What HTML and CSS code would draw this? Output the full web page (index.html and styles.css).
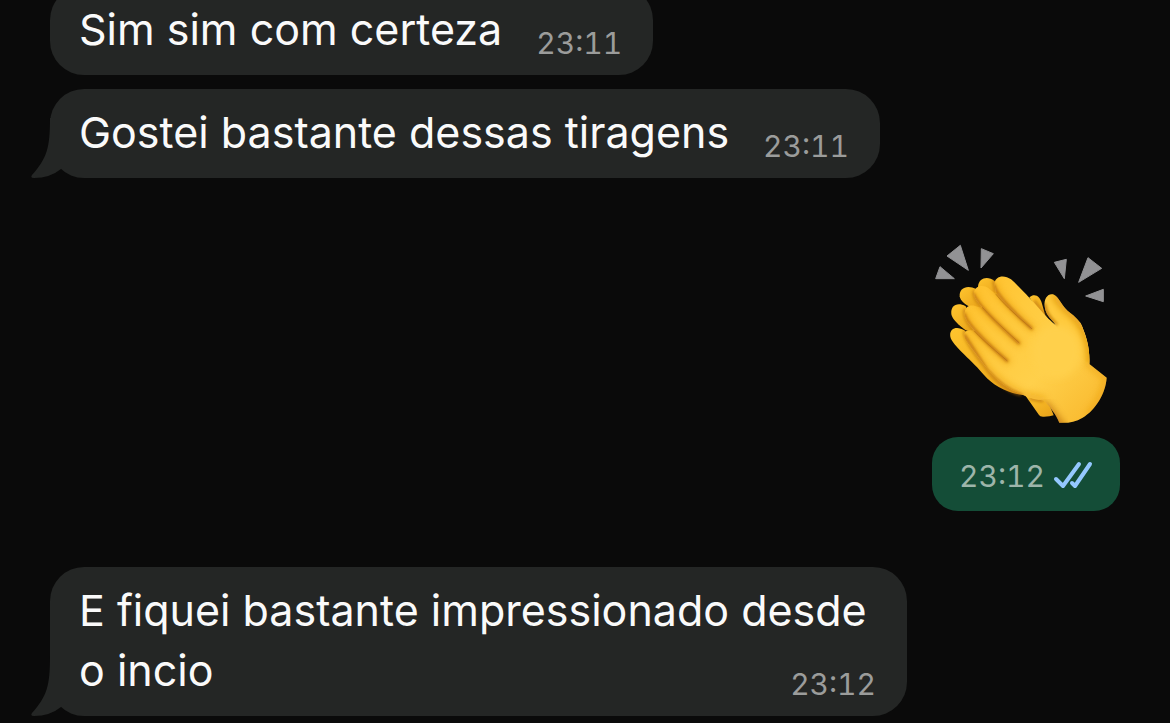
FILE: index.html
```html
<!DOCTYPE html>
<html lang="pt-BR">
<head>
    <meta charset="UTF-8">
    <meta name="viewport" content="width=device-width, initial-scale=1.0">
    <title>Conversa</title>
    <link rel="stylesheet" href="styles.css">
</head>
<body>
    <main class="chat">
        <div class="bubble">Sim sim com certeza<time class="time">23:11</time></div>

        <div class="bubble">
            <svg class="tail" viewBox="0 0 44 60" aria-hidden="true"><path d="M19 0C19 30 16 40 1 57Q-1 60 3 60Q19 60 30 51L44 40V0Z"/></svg>
            Gostei bastante dessas tiragens<time class="time">23:11</time>
        </div>

        <div class="sticker">
            <svg class="clap" viewBox="36 0 564 606" role="img" aria-label="Aplausos">
                <defs>
                    <linearGradient id="front" x1="0" y1="0" x2="1" y2="1">
                        <stop offset="0" stop-color="#ffc02b"/>
                        <stop offset=".3" stop-color="#ffca3d"/>
                        <stop offset=".6" stop-color="#ffd04b"/>
                        <stop offset="1" stop-color="#f8b62a"/>
                    </linearGradient>
                    <linearGradient id="back" x1="0" y1="0" x2="1" y2="1">
                        <stop offset="0" stop-color="#ffc52e"/>
                        <stop offset="1" stop-color="#e8a219"/>
                    </linearGradient>
                    <filter id="soft" x="-20%" y="-20%" width="140%" height="140%"><feGaussianBlur stdDeviation="4"/></filter>
                    <filter id="wide" x="-40%" y="-40%" width="180%" height="180%"><feGaussianBlur stdDeviation="11"/></filter>
                    <path id="hand" d="M224 151C221 123 252 117 273 133C300 157 339 199 372 237C390 256 402 269 424 281C445 288 460 262 480 262C500 300 510 342 508 387L560 428C557 474 528 524 488 548C465 562 440 565 418 563C409 540 390 515 370 496C345 494 320 488 300 475C257 460 222 428 195 393L140 321C125 300 135 284 151 286L164 288C145 266 130 249 135 228C139 209 158 208 174 216L188 218C171 199 159 186 163 169C169 149 192 150 206 160L229 179Z"/>
                    <path id="thumb" d="M374 214C371 188 386 173 402 179C418 186 425 215 452 235C474 252 486 267 490 285C502 315 510 350 508 387L440 335L403 263C388 249 376 235 374 214Z"/>
                    <clipPath id="handClip"><use href="#hand"/></clipPath>
                    <clipPath id="thumbClip"><use href="#thumb"/></clipPath>
                </defs>

                <!-- motion marks -->
                <g fill="#929294" stroke="#929294" stroke-width="3" stroke-linejoin="round">
                    <path d="M60 95L47 131L103 131Z"/>
                    <path d="M121 31L81 63L145 106Z"/>
                    <path d="M184 41L220 56L183 99Z"/>
                    <path d="M403 82L439 73L433 131Z"/>
                    <path d="M504 68L545 100L476 142Z"/>
                    <path d="M550 163L550 200L497 183Z"/>
                </g>

                <!-- far hand -->
                <g fill="url(#back)">
                    <path d="M315 480L357 540Q360 546 372 545Q390 545 401 541L376 480Z"/>
                    <path d="M328 187C345 173 360 184 366 206L378 250L350 220Z"/>
                    <path d="M174 154C177 127 205 122 224 139L240 180L190 180Z"/>
                    <path d="M119 184C117 158 142 148 169 162L190 220L150 216C132 207 121 196 119 184Z"/>
                    <path d="M94 237C91 212 112 200 137 214L170 292L137 286C116 270 96 252 94 237Z"/>
                    <path d="M91 305C87 281 109 271 135 287L220 390L310 480C260 474 220 452 192 420C163 382 95 330 91 305Z"/>
                </g>
                <g fill="none" stroke="#b66d09" stroke-width="9" stroke-linecap="round" opacity=".65" filter="url(#soft)">
                    <path d="M162 170Q159 190 184 213"/>
                    <path d="M134 225Q129 250 160 284"/>
                    <path d="M134 290Q125 306 195 395Q240 460 300 478"/>
                    <path d="M221 140L227 168"/>
                    <path d="M345 200L375 246"/>
                    <path d="M332 491L366 497"/>
                </g>

                <!-- near hand -->
                <use href="#hand" fill="url(#front)"/>
                <g clip-path="url(#handClip)" fill="none" stroke-linecap="round">
                    <g stroke="#e99b10" stroke-width="18" opacity=".6" filter="url(#wide)">
                        <path d="M224 151Q229 182 335 280"/>
                        <path d="M163 180Q173 216 297 325"/>
                        <path d="M135 239Q150 281 262 378"/>
                        <path d="M135 305L200 400Q250 455 305 478L370 493"/>
                        <path d="M508 325V387L560 428Q550 492 510 535"/>
                    </g>
                    <path stroke="#b4650c" stroke-width="34" opacity=".7" filter="url(#wide)" d="M378 520L425 585"/>
                    <g stroke="#b66808" stroke-width="7" filter="url(#soft)">
                        <path d="M222 149Q225 181 335 281"/>
                        <path d="M161 177Q172 212 297 325"/>
                        <path d="M133 236Q140 272 262 378"/>
                        <path d="M133 300L200 404Q250 462 305 480"/>
                    </g>
                    <g stroke="#b97311" stroke-width="3" opacity=".7">
                        <path d="M228 178Q250 209 335 281"/>
                        <path d="M187 217Q212 247 297 323"/>
                        <path d="M163 288Q185 313 261 377"/>
                    </g>
                </g>
                <use href="#thumb" fill="#ffca3d"/>
                <g clip-path="url(#thumbClip)" fill="none">
                    <path stroke="#dc910c" stroke-width="16" filter="url(#wide)" d="M402 177Q420 210 452 235Q510 285 510 390"/>
                    <path stroke="#c47b0a" stroke-width="9" filter="url(#soft)" d="M373 206Q376 240 412 271"/>
                </g>
                <ellipse cx="410" cy="350" rx="72" ry="80" fill="#ffd04b" filter="url(#wide)"/>
            </svg>
            <div class="stamp">
                <time class="stamp-time">23:12</time>
                <svg class="checks" viewBox="0 0 40 30" role="img" aria-label="Lida"><path d="M3 18L10 25L26 3M19 22L22 25L37 3"/></svg>
            </div>
        </div>

        <div class="bubble">
            <svg class="tail" viewBox="0 0 44 60" aria-hidden="true"><path d="M19 0C19 30 16 40 1 57Q-1 60 3 60Q19 60 30 51L44 40V0Z"/></svg>
            E fiquei bastante impressionado desde o incio<time class="time">23:12</time>
        </div>
    </main>
</body>
</html>
```
FILE: styles.css
```css
* {box-sizing: border-box;}
body {margin: 0; background: #0a0a0a; color: #fafafa; font-family: Inter, "Liberation Sans", sans-serif; overflow: hidden;}

.chat {display: flex; flex-direction: column; align-items: flex-start; gap: 14px; margin-top: -14px; padding: 0 50px;}

.bubble {position: relative; max-width: 857px; padding: 13px 28px 16px 29px; border-radius: 34px; background: #242625; font-size: 43px; line-height: 60px;}
.tail {position: absolute; left: -19px; bottom: 0; width: 44px; height: 60px; fill: #242625; clip-path: polygon(0 0, 30px 0, 30px 100%, 0 100%);}
.time {float: right; margin: 26px 3px -2px 34px; color: #9b9c9b; font-size: 30px; line-height: 36px; font-variant-numeric: tabular-nums;}

.sticker {align-self: flex-end; width: 188px; margin: 43px 0 42px;}
.clap {display: block; width: 188px; height: 202px;}
.stamp {display: flex; align-items: center; justify-content: center; gap: 8px; height: 74px; padding-top: 4px; border-radius: 26px; background: #144d37;}
.stamp-time {color: #9db5aa; font-size: 30px; line-height: 36px; font-variant-numeric: tabular-nums;}
.checks {width: 40px; height: 30px; fill: none; stroke: #94c8ff; stroke-width: 4; stroke-linecap: round; stroke-linejoin: round;}
```
